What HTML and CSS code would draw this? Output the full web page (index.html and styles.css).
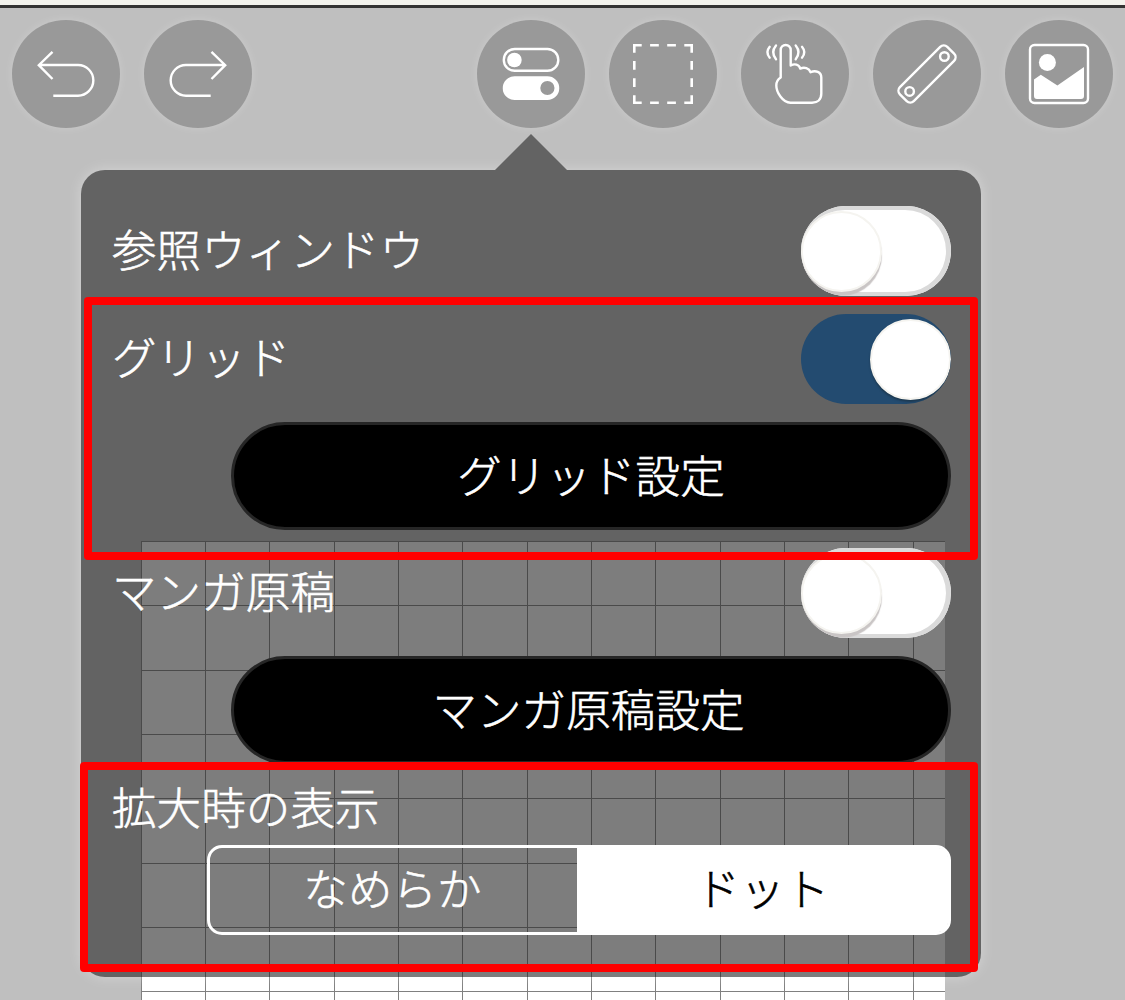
FILE: index.html
```html
<!DOCTYPE html>
<html lang="ja">
<head>
<meta charset="utf-8">
<title>グリッド設定</title>
<link rel="stylesheet" href="styles.css">
</head>
<body>
<svg class="canvas" width="804" height="459">
  <defs>
    <pattern id="grid" width="193" height="193" patternUnits="userSpaceOnUse">
      <path d="M0 .5H193M0 64.5H193M0 129.5H193M.5 0V193M64.5 0V193M128.5 0V193" stroke="#808080" fill="none"/>
    </pattern>
  </defs>
  <rect width="804" height="459" fill="#fff"/>
  <rect width="804" height="459" fill="url(#grid)"/>
</svg>

<div class="toolbar">
  <button class="tool">
    <svg viewBox="0 0 108 108"><path d="M40.5 31.8 26.8 45.2 40.5 59M26.8 45H66a15.35 15.35 0 0 1 0 30.7H41.3"/></svg>
  </button>
  <button class="tool">
    <svg viewBox="0 0 108 108"><path d="M67.5 31.8 81.2 45.2 67.5 59M81.2 45H42a15.35 15.35 0 0 0 0 30.7H66.7"/></svg>
  </button>
  <button class="tool push">
    <svg viewBox="0 0 108 108">
      <rect x="26.8" y="29" width="54.5" height="21.8" rx="10.9"/>
      <circle class="fill" cx="37.4" cy="40" r="7.3"/>
      <path class="fill" fill-rule="evenodd" d="M37.6 56.3H70.4a11.85 11.85 0 0 1 0 23.7H37.6a11.85 11.85 0 0 1 0-23.7ZM63.3 68a7.1 7.1 0 1 0 14.2 0a7.1 7.1 0 1 0-14.2 0Z"/>
    </svg>
  </button>
  <button class="tool">
    <svg viewBox="0 0 108 108">
      <path class="dashed" d="M24 25.3H84M24 82.7H84M25.3 24V84M82.7 24V84"/>
    </svg>
  </button>
  <button class="tool">
    <svg viewBox="0 0 108 108">
      <path class="round" d="M39.7 57.5V30a5 5 0 0 1 10 0V45.5C53.5 43.4 58 44.2 59.3 48.6C63.3 46.9 68 48 69.6 52.2C74.5 50 80.3 51.7 80.3 57.5V73.5C80.3 79.5 76.5 82.7 71 82.7H49.5C41.5 82.7 35.3 72 35.3 65.5C35.3 61.5 36.5 59.5 39.7 57.5Z"/>
      <path class="round" d="M35 25.5Q29.4 32.3 35 39.2M28.7 26.8Q24.1 32.3 28.7 37.7M54.7 25.5Q60.3 32.3 54.7 39.2M61 26.8Q65.6 32.3 61 37.7"/>
    </svg>
  </button>
  <button class="tool">
    <svg viewBox="0 0 108 108">
      <rect x="20.5" y="44.2" width="67" height="19.6" rx="5" transform="rotate(-45 54 54)"/>
      <circle cx="71.4" cy="36.5" r="4.3"/>
      <circle cx="36.6" cy="71.4" r="4.3"/>
    </svg>
  </button>
  <button class="tool">
    <svg viewBox="0 0 108 108">
      <rect x="25" y="25" width="58" height="58" rx="4.5"/>
      <circle class="fill" cx="42.4" cy="42.4" r="8.5"/>
      <path class="fill" d="M29 59.4 35.8 54.7 52.4 65.6 79 47V76a3 3 0 0 1-3 3H32a3 3 0 0 1-3-3Z"/>
    </svg>
  </button>
</div>

<div class="panel">
  <div class="row">
    <span>参照ウィンドウ</span>
    <div class="switch"><div class="knob"></div></div>
  </div>
  <div class="row">
    <span>グリッド</span>
    <div class="switch on"><div class="knob"></div></div>
  </div>
  <button class="setting">グリッド設定</button>
  <div class="row">
    <span>マンガ原稿</span>
    <div class="switch"><div class="knob"></div></div>
  </div>
  <button class="setting manga">マンガ原稿設定</button>
  <div class="row zoom-label"><span>拡大時の表示</span></div>
  <div class="segment">
    <div class="option">なめらか</div>
    <div class="option selected">ドット</div>
  </div>
</div>

<div class="mark mark-grid"></div>
<div class="mark mark-zoom"></div>
</body>
</html>
```
FILE: styles.css
```css
* {
  box-sizing: border-box;
}

body {
  margin: 0;
  position: relative;
  height: 1000px;
  overflow: hidden;
  background: #bfbfbf;
  border-top: 5px solid #f3f3ed;
  font-family: "Noto Sans CJK JP", sans-serif;
  font-weight: 300;
  font-size: 44.5px;
  letter-spacing: 0.1px;
  -webkit-text-stroke: 0.6px;
  color: #fff;
}

button {
  border: none;
  padding: 0;
  font: inherit;
  letter-spacing: inherit;
  color: inherit;
}

/* drawing canvas behind the popup */
.canvas {
  position: absolute;
  left: 141px;
  top: 536px;
}

.toolbar {
  position: relative;
  display: flex;
  gap: 24px;
  padding: 12px 12px 0;
  border-top: 3px solid #333;
}

.tool {
  width: 108px;
  height: 108px;
  border-radius: 50%;
  background: #999;
  box-shadow: 0 0 8px rgba(255, 255, 255, 0.2);
}

.push {
  margin-left: auto;
}

.tool svg {
  display: block;
  fill: none;
  stroke: #fff;
  stroke-width: 2.4;
}

.tool .fill {
  fill: #fff;
  stroke: none;
}

.tool .dashed {
  stroke-width: 2.6;
  stroke-dasharray: 8.7 8.4;
}

.tool .round {
  stroke-linecap: round;
  stroke-linejoin: round;
}

.panel {
  position: relative;
  display: flex;
  flex-direction: column;
  gap: 18px;
  width: 900px;
  height: 807px;
  margin: 42px 0 0 81px;
  padding: 36px 30px;
  border-radius: 24px;
  background: rgba(38, 38, 38, 0.6);
  box-shadow: 0 0 14px rgba(255, 255, 255, 0.35);
}

.panel::before {
  content: "";
  position: absolute;
  left: 414px;
  top: -36px;
  width: 72px;
  height: 36px;
  background: #636363;
  clip-path: polygon(50% 0, 100% 100%, 0 100%);
}

.row {
  display: flex;
  align-items: center;
  justify-content: space-between;
  height: 90px;
  line-height: 90px;
}

.row span {
  padding: 0 0 6px 1px;
}

.switch {
  display: flex;
  align-items: center;
  width: 150px;
  height: 90px;
  border-radius: 45px;
  background: #fff;
  box-shadow: inset -1px 0 0 4px #dadada;
  overflow: hidden;
}

.knob {
  width: 81px;
  height: 81px;
  border-radius: 50%;
  background: #fff;
  border: 2px solid #f5f4f0;
  box-shadow: 0 4px 1px #c9c5c5;
}

.on {
  justify-content: flex-end;
  background: #234b70;
  box-shadow: none;
}

.on .knob {
  box-shadow: 0 2px 2px #1d3950;
}

.setting {
  flex: none;
  align-self: flex-end;
  width: 720px;
  height: 108px;
  padding-bottom: 6px;
  border: 3px solid #262626;
  border-radius: 54px;
  background: #000;
}

.manga {
  padding-right: 5px;
}

.zoom-label {
  height: 54px;
  line-height: 54px;
  margin-bottom: -9px;
}

.segment {
  align-self: flex-end;
  display: flex;
  width: 744px;
  height: 90px;
  border: 3px solid #fff;
  border-radius: 15px;
  line-height: 78px;
  text-align: center;
}

.option {
  width: 367px;
  padding-right: 2px;
}

.selected {
  flex: 1;
  padding: 0;
  border-radius: 0 9px 9px 0;
  background: #fff;
  color: #000;
}

/* red highlight frames */
.mark {
  position: absolute;
  border: 8px solid #f00;
  border-radius: 4px;
}

.mark-grid {
  left: 84px;
  top: 292px;
  width: 894px;
  height: 263px;
}

.mark-zoom {
  left: 80px;
  top: 757px;
  width: 898px;
  height: 210px;
}
```
